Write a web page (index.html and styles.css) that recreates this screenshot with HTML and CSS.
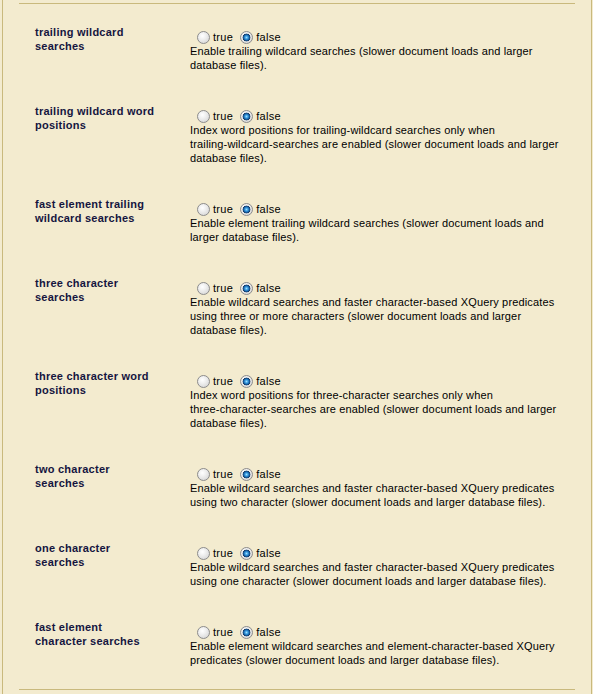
FILE: index.html
```html
<!DOCTYPE html>
<html>
<head>
<meta charset="utf-8">
<link rel="stylesheet" href="styles.css">
</head>
<body>
<div class="frame">
  <div class="section">
    <div class="row">
      <div class="label">trailing wildcard searches</div>
      <div class="field">
        <div class="choices">
          <label class="opt"><input type="radio" name="r1"><span>true</span></label>
          <label class="opt"><input type="radio" name="r1" checked><span>false</span></label>
        </div>
        <div class="desc">Enable trailing wildcard searches (slower document loads and larger<br>database files).</div>
      </div>
    </div>
    <div class="row">
      <div class="label">trailing wildcard word positions</div>
      <div class="field">
        <div class="choices">
          <label class="opt"><input type="radio" name="r2"><span>true</span></label>
          <label class="opt"><input type="radio" name="r2" checked><span>false</span></label>
        </div>
        <div class="desc">Index word positions for trailing-wildcard searches only when<br>trailing-wildcard-searches are enabled (slower document loads and larger<br>database files).</div>
      </div>
    </div>
    <div class="row">
      <div class="label">fast element trailing wildcard searches</div>
      <div class="field">
        <div class="choices">
          <label class="opt"><input type="radio" name="r3"><span>true</span></label>
          <label class="opt"><input type="radio" name="r3" checked><span>false</span></label>
        </div>
        <div class="desc">Enable element trailing wildcard searches (slower document loads and<br>larger database files).</div>
      </div>
    </div>
    <div class="row">
      <div class="label">three character searches</div>
      <div class="field">
        <div class="choices">
          <label class="opt"><input type="radio" name="r4"><span>true</span></label>
          <label class="opt"><input type="radio" name="r4" checked><span>false</span></label>
        </div>
        <div class="desc">Enable wildcard searches and faster character-based XQuery predicates<br>using three or more characters (slower document loads and larger<br>database files).</div>
      </div>
    </div>
    <div class="row">
      <div class="label">three character word positions</div>
      <div class="field">
        <div class="choices">
          <label class="opt"><input type="radio" name="r5"><span>true</span></label>
          <label class="opt"><input type="radio" name="r5" checked><span>false</span></label>
        </div>
        <div class="desc">Index word positions for three-character searches only when<br>three-character-searches are enabled (slower document loads and larger<br>database files).</div>
      </div>
    </div>
    <div class="row">
      <div class="label">two character searches</div>
      <div class="field">
        <div class="choices">
          <label class="opt"><input type="radio" name="r6"><span>true</span></label>
          <label class="opt"><input type="radio" name="r6" checked><span>false</span></label>
        </div>
        <div class="desc">Enable wildcard searches and faster character-based XQuery predicates<br>using two character (slower document loads and larger database files).</div>
      </div>
    </div>
    <div class="row">
      <div class="label">one character searches</div>
      <div class="field">
        <div class="choices">
          <label class="opt"><input type="radio" name="r7"><span>true</span></label>
          <label class="opt"><input type="radio" name="r7" checked><span>false</span></label>
        </div>
        <div class="desc">Enable wildcard searches and faster character-based XQuery predicates<br>using one character (slower document loads and larger database files).</div>
      </div>
    </div>
    <div class="row">
      <div class="label">fast element character searches</div>
      <div class="field">
        <div class="choices">
          <label class="opt"><input type="radio" name="r8"><span>true</span></label>
          <label class="opt"><input type="radio" name="r8" checked><span>false</span></label>
        </div>
        <div class="desc">Enable element wildcard searches and element-character-based XQuery<br>predicates (slower document loads and larger database files).</div>
      </div>
    </div>
  </div>
</div>
</body>
</html>
```
FILE: styles.css
```css
html, body {
  margin: 0;
  padding: 0;
  background: #f3ebcf;
}
body {
  font-family: "Liberation Sans", Arial, sans-serif;
  font-size: 11px;
  line-height: 14px;
  color: #000;
}
.frame {
  margin-left: 2px;
  width: 588px;
  min-height: 694px;
  border-left: 1px solid #c9b97d;
  border-right: 1px solid #c9b97d;
  padding-top: 3px;
  box-sizing: content-box;
}
.section {
  margin: 0 16px;
  border-top: 1px solid #c9b97d;
  border-bottom: 1px solid #c9b97d;
  padding: 5px 0 6px;
}
.row {
  display: grid;
  grid-template-columns: 121px 1fr;
  column-gap: 34px;
  padding: 16px 16px;
}
.label {
  font-weight: bold;
  color: #15153f;
  letter-spacing: 0.25px;
}
.desc {
  white-space: nowrap;
  letter-spacing: 0.15px;
}
.choices {
  display: flex;
  align-items: center;
  height: 14px;
  margin-top: 5px;
}
.opt {
  display: flex;
  align-items: center;
}
.opt input {
  appearance: none;
  -webkit-appearance: none;
  width: 13px;
  height: 13px;
  margin: 0 3px 0 7px;
  border: 1px solid #8c8c8c;
  border-radius: 50%;
  box-sizing: border-box;
  background: radial-gradient(circle at 40% 35%, #ffffff 0, #f0f0f0 35%, #cfcfcf 100%);
}
.opt input:checked {
  background:
    radial-gradient(circle at 50% 50%, #9fdcff 0, #3a9ee0 1.5px, #1560a8 2.8px, #173a63 3.6px, rgba(23,58,99,0) 4.2px),
    radial-gradient(circle at 40% 35%, #ffffff 0, #f0f0f0 35%, #cfcfcf 100%);
}
.opt span {
  line-height: 14px;
  letter-spacing: 0.3px;
}
```
